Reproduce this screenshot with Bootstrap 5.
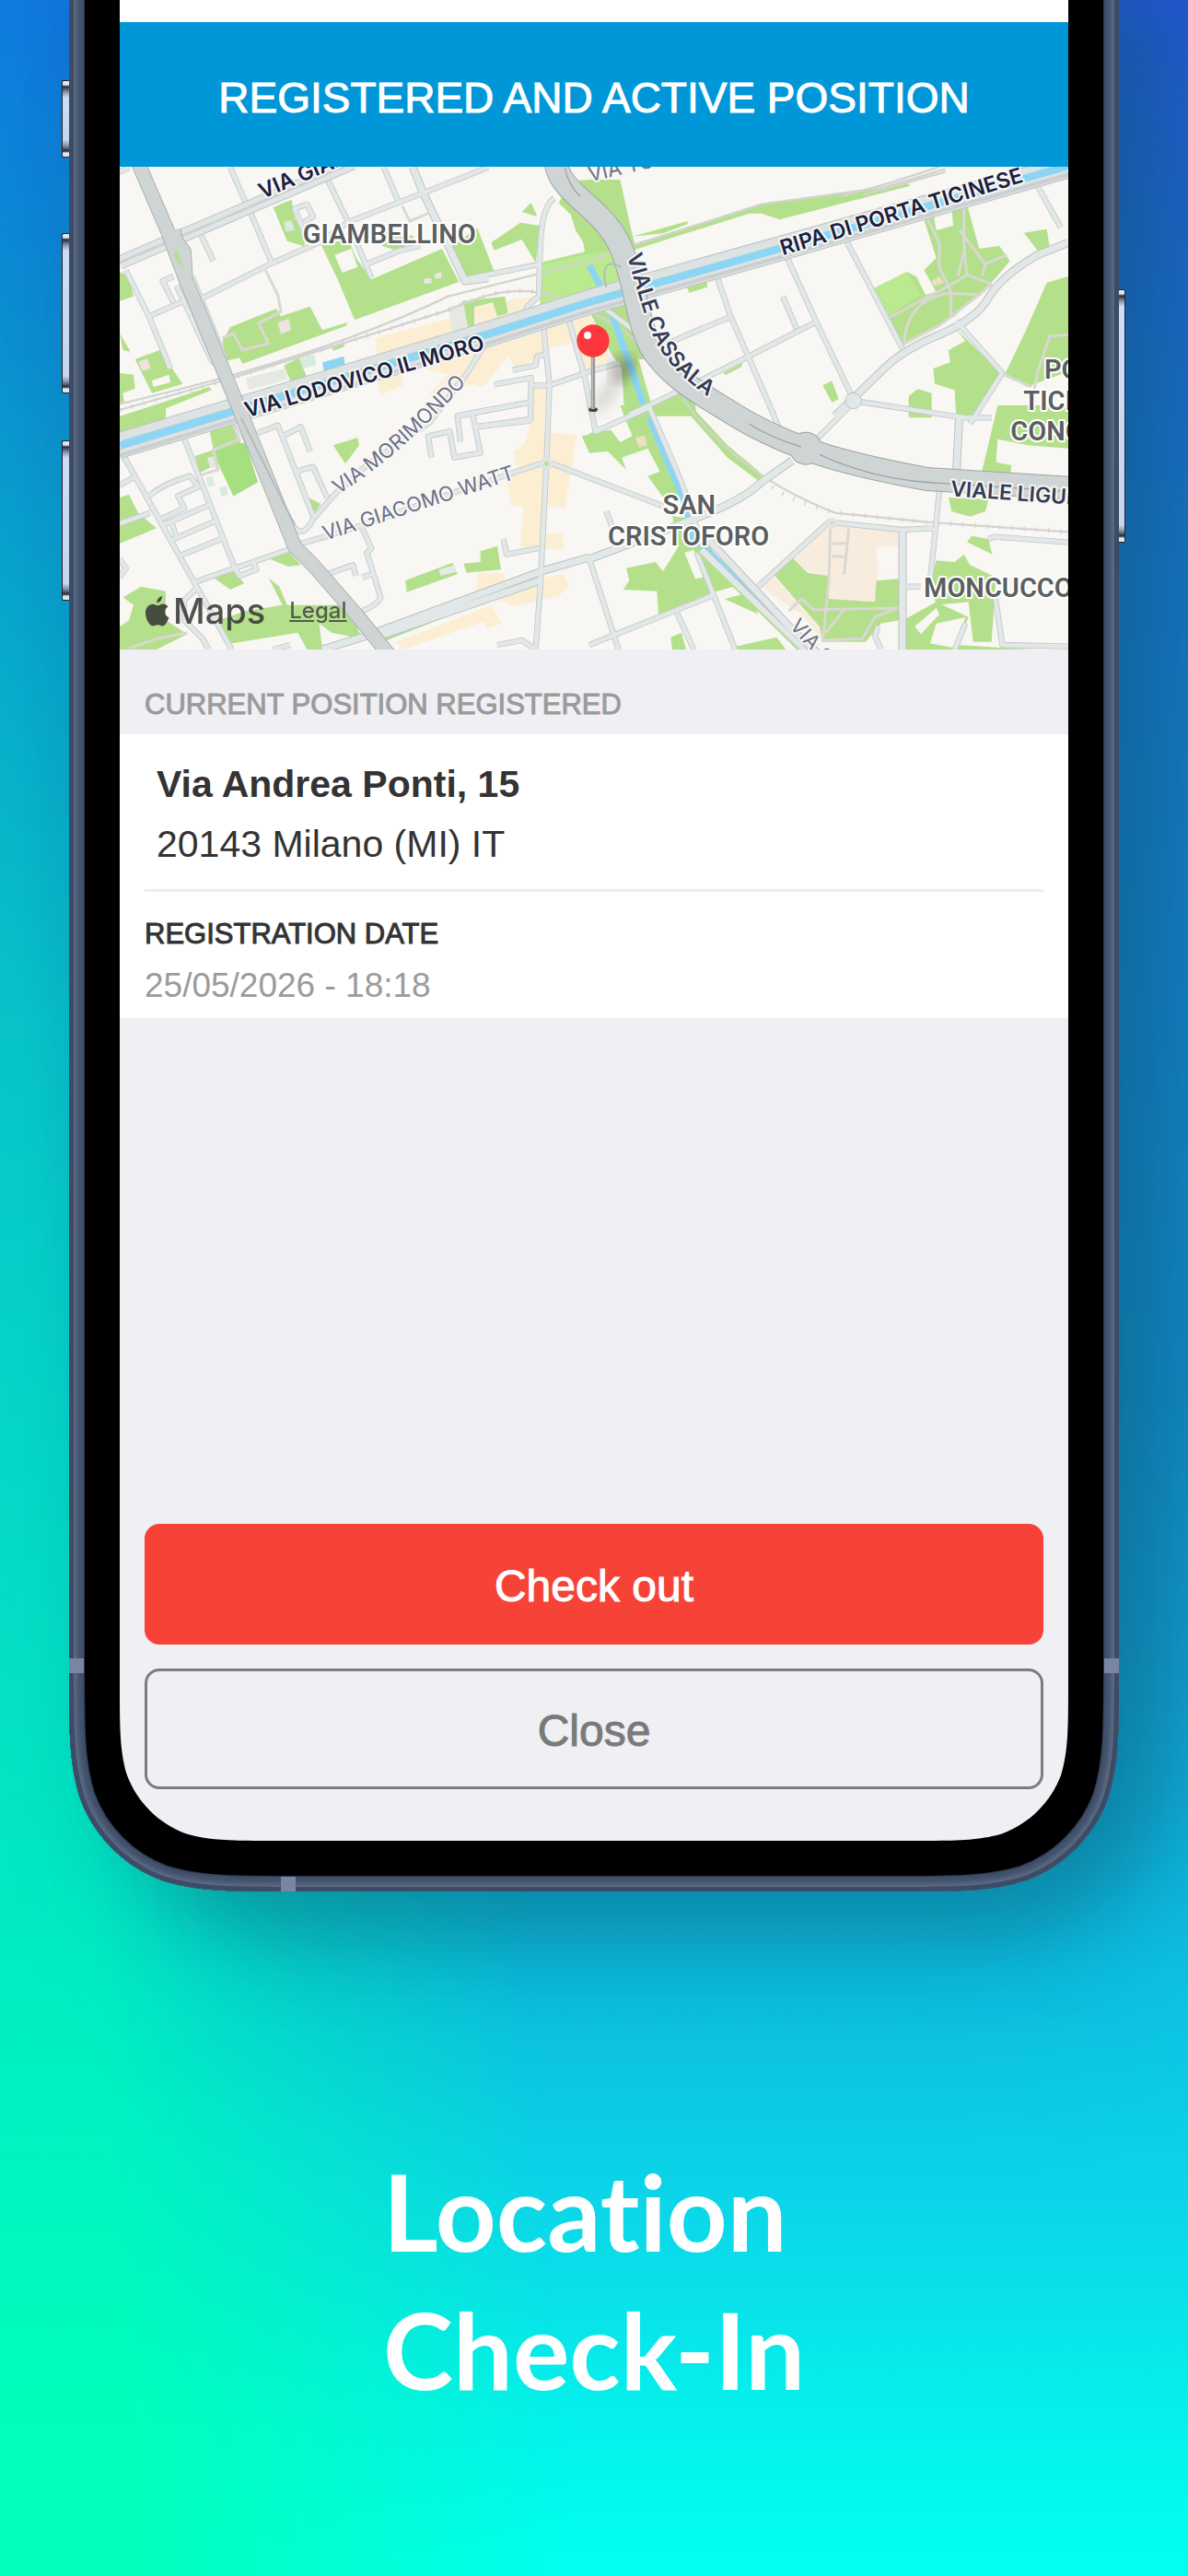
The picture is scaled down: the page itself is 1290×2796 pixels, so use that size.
<!DOCTYPE html>
<html lang="en">
<head>
<meta charset="utf-8">
<meta name="viewport" content="width=device-width, initial-scale=1">
<title>Location Check-In</title>
<link href="https://cdn.jsdelivr.net/npm/bootstrap@5.3.0/dist/css/bootstrap.min.css" rel="stylesheet">
<style>
body{font-family:"Liberation Sans",Arial,sans-serif;color:#333}
.stage{background:linear-gradient(#2358d2 0,#1a73c8 22%,#128bc8 54%,#149dd2 64%,#0ec2e4 76%,#0cd4e8 85%,#06eeec 93%,#00fff0 99%);padding:0 75px;isolation:isolate}
.stage::before{content:"";position:absolute;inset:0;z-index:-1;background:linear-gradient(#0c7fe0 0,#0a90d2 12%,#08aacb 25%,#08c4ca 40%,#06d5c8 54%,#04e2c6 66%,#00f0c2 80%,#00ffba 94%);-webkit-mask-image:linear-gradient(86deg,#000 10%,transparent 42%);mask-image:linear-gradient(86deg,#000 10%,transparent 42%)}
.shell{margin-top:-55px;padding:55px;border-radius:0 0 190px 190px;background:#000;
box-shadow:inset 0 0 0 5px #3d4c66,inset 0 0 0 7px #586880,inset 0 0 0 9px #52617a,inset 0 0 0 11px #4a5973,inset 0 0 0 14px #42516c,inset 0 0 0 16px #3e4c68,inset 0 0 0 17px #2f3a50,50px 50px 90px rgba(10,80,105,.4),90px 150px 180px rgba(10,110,140,.14)}
.display{background:#efeff4;border-radius:0 0 90px 90px;min-height:1998px;padding-top:24px;background-image:linear-gradient(#fff,#fff);background-size:100% 24px;background-repeat:no-repeat}
.titlebar{background:#0097d9;height:157px;padding-top:6px}
.titlebar h1{font-size:46px;line-height:56px}
.medium{-webkit-text-stroke:1px currentColor}
.corner{position:absolute;bottom:0;width:250px;height:250px;pointer-events:none}
.corner-l{left:0}.corner-r{right:0;transform:scaleX(-1)}
.band{position:absolute;width:16px;height:16px;background:#7b85a3}
.key{position:absolute;width:8px;border:1px solid #20242e;background:linear-gradient(#dfe4ee 0,#dfe4ee 4px,#222a38 6px,#8c96a8 12px,#cddcf7 18px,#c6d5f0 calc(100% - 18px),#8c96a8 calc(100% - 12px),#222a38 calc(100% - 6px),#dfe4ee calc(100% - 4px))}
.key-l{left:-8px;border-right:0;border-radius:2px 0 0 2px}.key-r{right:-7px;width:7px;border-left:0;border-radius:0 2px 2px 0}
.key-1{top:142px;height:84px}.key-2{top:308px;height:174px}.key-3{top:533px;height:174px}.key-4{top:369px;height:275px}
.band-l{left:0;bottom:237px}.band-r{right:0;bottom:237px}.band-b{left:230px;bottom:0}
.map-credit{left:28px;bottom:18px;gap:26px;color:#333;opacity:.85}
.map-brand{font:500 38px/48px Inter,sans-serif}
.map-legal{font:500 24px/32px Inter,sans-serif;color:#444}
.section-label{font-size:31px;line-height:36px;color:#9b9b9b;padding:42px 27px 14px}
.info{padding:22px 27px 14px}
.address{font-size:41px;line-height:65px;padding:0 13px 16px;border-bottom:3px solid #ededed}
.date-label{font-size:31px;line-height:36px;margin-top:28px}
.date-value{font-size:37px;line-height:42px;color:#9b9b9b;margin-top:17px}
.actions{padding:0 27px 56px;gap:26px}
.act{height:131px;padding-top:10px;font-size:48px;border-radius:16px;border-width:3px}
.act-out{--bs-btn-bg:#f64237;--bs-btn-border-color:#f64237;--bs-btn-color:#fff;--bs-btn-hover-bg:#e0382e;--bs-btn-hover-color:#fff}
.act-close{--bs-btn-color:#7a7a7a;--bs-btn-border-color:#7c7c7c;--bs-btn-hover-bg:#e2e1e8}
.caption-text{font:700 115px/150px Lato,sans-serif;font-variant-ligatures:none;margin:271px 0 60px}
.lbl{font-family:Inter,sans-serif;font-size:69px;font-weight:600;fill:#1a2040;stroke:#f8f7f3;stroke-width:12px;stroke-linejoin:round;paint-order:stroke}
.lbl-s{font-size:66px;font-weight:400;fill:#6b7088}
.lbl-v{fill:#343c58}
.lbl-d{font-family:Roboto,sans-serif;font-size:87px;font-weight:600;fill:#5b5f60;stroke:#fff}
</style>
</head>
<body>
<main class="stage position-relative overflow-hidden min-vh-100">
<div class="shell position-relative">
  <span class="key key-l key-1"></span>
  <span class="key key-l key-2"></span>
  <span class="key key-l key-3"></span>
  <span class="key key-r key-4"></span>

  <div class="display d-flex flex-column">
    <header class="titlebar d-flex align-items-center justify-content-center text-white text-center"><h1 class="m-0 fw-normal medium">REGISTERED AND ACTIVE POSITION</h1></header>

    <div class="position-relative">
    <svg class="d-block w-100 h-auto" viewBox="30 33 3090 1572" role="img" aria-label="Map of Milano around Via Andrea Ponti">
      <defs>
        <filter id="soft" x="-50%" y="-50%" width="200%" height="200%"><feGaussianBlur stdDeviation="22"/></filter>
        <path id="cassala" d="M1682 322C1715 430 1740 530 1775 600C1830 700 1900 760 2100 880"/>
        <path id="morimondo" d="M742 1100Q960 965 1200 690"/>
        <g id="streets">
          <path d="M30 50L60 35M390 35L440 150M455 180L525 345M300 460L530 345L690 275L770 215L1040 110L1230 35M700 60L775 215L850 395M890 35L940 150M835 350L945 305L1010 290M50 370L125 520L195 690M125 520L240 470M205 475L170 405L205 390M295 255L335 340M640 270L600 170L640 155L660 195L630 215M1150 400L1400 350M1445 135C1400 170 1400 250 1395 455L1355 490V515M1165 700L1215 620M1310 695L1385 680L1390 650L1415 645M1250 742L1370 720L1368 855L1190 880M1410 550L1430 740L1420 1000L1400 1400L1385 1605M1490 520L1545 720L1580 895L1760 815M1375 745L1430 745L1560 700L1660 672M1130 843L1370 800"/>
          <path d="M215 420L330 665Q355 690 370 650L265 390M405 855L600 1210Q630 1240 660 1180L730 1100L840 1000L1040 865L1165 700M480 900L545 875L660 1170M560 910L620 880L650 960M605 1025L660 1010L705 1110M40 970L275 1390L395 1605M235 905L405 1340M30 1070L75 1045M30 1195L130 1160M125 1105Q180 1060 260 1040L285 1075L220 1105L240 1145L165 1180M170 1200L320 1135M195 1250L345 1185M225 1300L360 1245M200 1195L215 1240M275 1385L580 1280M405 1340L420 1365L475 1345L465 1320M620 1260L690 1240L820 1200L1130 1090L1340 1020L1400 1000L1440 1000L1800 1138M705 1360L790 1330L800 1365M815 1200L850 1275L835 1290L880 1435Q870 1460 820 1480M820 1370L850 1360M1045 980L1035 910L1105 895L1120 980L1205 965L1180 840M1140 930L1130 845L1365 800M1190 880L1370 860M1280 1245L1290 1295L1395 1275M530 1605L585 1590M285 1400L240 1445V1510L300 1570L320 1605M1260 1590L1340 1575L1385 1605M30 1310L50 1340L30 1370"/>
          <path d="M1970 375L2020 520L2160 840L2175 880M2200 320L2300 540L2420 790M2190 455L2235 560M1790 620Q1900 570 2025 520M1690 840L1880 750L2080 650L2295 540M3000 60L3095 230M2755 535L2905 705L2800 870M1605 490L1730 585M2420 795L2780 850L2870 850M1755 815L1860 1060L1930 1270M1560 1310L1655 1605M1615 1155L1640 1220M1910 1290L2035 1605M1560 1590L1960 1430M1845 1485L1900 1605M2110 1400L2340 1190L2580 1215L2680 1210M2700 1090L2670 1380M2590 1400H2640M2860 1245L2880 1238L3120 1256M2880 1420L2905 1590L3120 1595M2785 1520L2750 1605M2500 1530L2490 1560L2510 1605M2300 920L2410 810M2390 260L2580 625"/>
        </g>
        <g id="avenues">
          <path d="M985 35L1015 110L1155 405L1230 395M2360 845L2520 690Q2580 630 2700 580T2860 460T3020 320L3120 280M1560 1310L1680 1265L1900 1180Q2060 1120 2120 1060L2220 990M2765 840L2755 1040M2580 1215V1605M690 1605L820 1565L1420 1345L1560 1305M880 1560L1400 1380M1925 1280L2270 1620M1950 1250L2220 1540L2330 1640"/>
        </g>
        <g id="bank"><path d="M30 912L405 800L1240 548L1560 447L2200 268L3120 10M30 968L405 855L1240 602L1560 500L2200 320L3120 55"/></g>
        <path id="viale" d="M1450 15C1460 120 1600 160 1660 290C1710 400 1710 520 1760 620C1820 720 1920 770 2040 845Q2130 900 2260 950T2660 1050L3130 1080"/>
        <path id="west" d="M90 20L185 240L245 400L425 835L600 1270L660 1330L800 1490L910 1625M205 240L245 400M195 250L240 310L245 400"/>
      </defs>
      <rect x="30" y="33" width="3090" height="1572" fill="#f8f7f3"/>
      <g fill="#fbeed3">
        <path d="M865 590L1110 525L1125 575L865 650ZM870 735L945 700L955 745L880 775ZM1020 690L1400 570L1415 650L1320 690L1295 650L1215 750L1180 740L1060 790L1040 770L1100 710ZM1415 545L1500 525L1530 600L1430 625ZM1180 490L1400 450L1350 500L1190 550ZM1380 750H1420L1410 900L1520 905L1510 960L1480 1145L1420 1140L1410 1225L1475 1230V1280L1335 1270L1345 1140L1305 1135L1290 1050L1330 1030L1310 960L1350 935L1370 850ZM1200 1355H1280L1290 1390L1475 1360L1495 1400L1460 1430L1320 1465L1190 1415ZM930 1580L1240 1460L1275 1520L1230 1535L1215 1515L950 1605ZM1495 525L1560 510L1620 640L1615 675L1545 700Z"/>
        <path fill="#f8ecde" d="M2340 1205L2410 1200L2570 1220V1360H2500L2490 1450L2340 1440V1365L2260 1350L2220 1305ZM2120 1400L2155 1365L2320 1530L2315 1570L2250 1490L2160 1430Z"/>
      </g>
      <path fill="#f8f7f3" d="M2495 1270H2570V1360H2500Z"/>
      <g fill="#b4e08c">
        <path d="M530 165L590 140L600 200L640 260L630 292L575 275ZM685 285L775 270L800 330L850 400L1080 300L1135 408L795 532L740 400ZM885 290L900 235L990 260L940 310ZM1115 290L1195 232L1250 375L1150 400ZM1240 280L1335 215L1400 225L1385 345L1340 270L1250 305ZM1340 180L1370 150L1390 195ZM1400 345L1545 310L1540 280L1515 240L1500 190L1460 150L1500 80L1560 75H1660L1700 255L1710 290L1670 420L1560 460L1400 495ZM1560 505L1690 480L1770 640L1900 770L1910 845H1675L1665 690L1630 640Z"/>
        <path d="M30 375L60 390L75 455L30 470ZM390 555L540 495L555 520L650 488L690 565L770 540V550L430 675L420 655L375 665L365 600ZM80 660L160 630L235 740L135 770ZM30 575L65 635L40 630ZM30 705L75 710L80 755L40 770L45 800L30 810ZM30 845L170 800L320 750L330 760L180 820V860L30 905ZM195 300L215 290L230 365ZM565 680L615 655L640 720L590 740ZM725 620L760 605V620L725 632ZM1145 470L1285 455L1295 510L1260 520L1245 475L1185 490V560H1165Z"/>
        <path d="M320 880L395 860L420 920L480 1060L400 1105L350 1000L290 1030L275 975L335 955ZM30 1110L60 1100L90 1160L150 1210L30 1260ZM725 940L805 915L810 940L765 1000ZM645 1110L685 1130L660 1170ZM505 1305L580 1285L620 1330L580 1335ZM335 1370L405 1350L435 1390L390 1410ZM960 1380L1115 1322L1130 1360L965 1418ZM1150 1325L1205 1320V1285L1260 1268L1272 1345L1160 1355ZM40 1435L100 1400L180 1415V1510L250 1555L150 1605H30V1530L60 1510L75 1460ZM515 1372L550 1400L575 1460L770 1460L820 1570L720 1550L680 1520L690 1605H640L610 1550L395 1585L370 1550L350 1510L440 1480L560 1460ZM1535 910L1560 905V965ZM880 1565L1400 1365L1395 1380L900 1575Z"/>
        <path d="M1700 285L2120 155L2600 88L2605 95L2180 205L2120 185L2080 185L1700 305ZM1700 260L1880 210V220L1800 250ZM1870 405L1940 390L1945 425L1885 443ZM2485 430L2595 375L2625 390L2655 450L2690 440L2650 370L2690 330L2645 190L2680 180L2690 240L2745 225L2740 165L2790 155L2830 300L2895 290L2930 340L2870 410L2750 520L2580 615ZM2975 248L3050 236L3060 300L3020 305ZM3120 390L3050 410L2980 570L2915 705L2985 750L3120 700ZM2750 555L2785 600L2730 630L2735 670L2680 690L2685 740L2750 760L2755 850H2820L2905 710ZM2600 780L2630 757L2675 770V850H2600ZM2320 745L2350 730L2372 790L2350 800ZM1995 705L2060 670L2055 685L2005 710ZM2730 150L2880 105L2810 150Z"/>
        <path d="M1660 810H1760L1865 1110L1800 1110L1750 1040L1790 1025L1750 950L1665 980L1680 1020L1620 960L1560 965V900L1630 890L1660 930L1700 910L1675 850ZM2890 810H3120V950L2990 940L2890 920L2885 995L2935 1005L2930 1045L2835 1040ZM2730 1110L2860 1115L2850 1155L2800 1172L2740 1155ZM2790 1255L2805 1235L2860 1245L2872 1295ZM2690 1315L2750 1320L2780 1295L2800 1330L2885 1370L2870 1580H2810L2795 1450L2690 1460L2670 1390ZM2590 1505L2690 1450L2795 1500L2760 1590L3000 1605H2590ZM1830 1170L1900 1180L2030 1400L1960 1420L1785 1490L1780 1415L1670 1410L1690 1380L1680 1340L1775 1320L1800 1350L1850 1270ZM1860 810H1890L2010 940L2130 1040L2110 1055L2010 980ZM2000 1440L2080 1420L2110 1490ZM2035 1595L2170 1565L2200 1605H2040ZM1825 1565L1860 1550L1875 1605H1830ZM2155 1355L2220 1305L2270 1355L2340 1365V1440L2490 1450L2495 1380L2570 1375V1510L2510 1520L2460 1580H2320L2310 1530Z"/>
      </g>
      <g fill="#f8f7f3"><path d="M730 320L785 300L805 360L755 378ZM1720 660H1750L1850 755L1760 800ZM2620 1530L2690 1470L2700 1490L2640 1555ZM2690 1520L2785 1500L2750 1600L2670 1585ZM135 730L190 710L195 735L140 750ZM1870 1290L1900 1280L1930 1370L1905 1375Z"/></g>
      <path fill="#a5df80" d="M340 960L440 930L480 1060L400 1105Z"/>
      <path fill="#bae98f" d="M1405 350L1560 315L1680 300L1670 415L1405 490ZM2485 430L2595 375L2640 450L2535 520Z"/>
      <path fill="#f0e2e1" d="M545 540L580 528L588 565L555 578ZM90 668L120 658L130 690L105 698Z"/>
      <path fill="#e6e9e2" d="M440 720L570 690L575 725L450 760ZM1100 490L1150 480L1165 560L1115 570ZM1020 398L1045 395V412L1022 415ZM1055 382L1078 376V396L1058 398ZM1070 1345L1120 1330L1125 1352L1075 1365ZM315 980L340 975L350 1010L325 1015Z"/>
      <path fill="#d9ebdf" d="M565 212L590 208L600 240L570 244ZM618 655L665 645L670 680L625 690ZM310 1045L330 1040L340 1070L318 1075ZM355 1078L378 1072L384 1100L362 1108Z"/>
      <path fill="#8cd6f5" d="M690 670L760 650L765 685L695 700Z"/>
      <path fill="#eddfc4" d="M2675 405L2700 390L2715 410L2685 422ZM1710 915L1740 908L1748 940L1722 948Z"/>
      <g fill="none" stroke="#d9d8d4" stroke-width="9"><path d="M365 590L400 575L430 630L515 608L482 543L555 505L545 450L505 370M950 160L975 210L1035 185M2535 525L2750 410L2790 385L2870 415M2585 610C2590 500 2660 450 2740 445L2830 450L2870 415M2585 610L2700 550L2830 450M2655 190L2700 280L2700 360L2738 440V520M2780 155V290L2790 385M2765 240L2850 350L2840 390M2850 350L2920 320M2760 390L2785 290M285 1040L350 1020L335 955L420 920L390 850M60 1600L150 1570L250 1550M2210 1480L2250 1440L2290 1475L2570 1470M2320 1575L2450 1570L2490 1500L2560 1470M2330 1550L2390 1475M3120 580L3060 585L3020 700L3000 810M2910 710L3000 750M2345 1210L2340 1380L2320 1580M2405 1210L2390 1360M2350 1260H2400M2350 1302H2390"/></g>
      <g fill="none" stroke="#d2d3d0" stroke-width="7"><path d="M30 805Q700 650 1100 455L1560 340L1700 290L2120 155L2520 100L2720 40M30 825L400 720L1100 500C1250 430 1350 425 1450 455C1620 520 1760 600 1880 810C2010 980 2160 1080 2360 1160L2660 1190L3120 1222"/><path d="M2380 130L2540 85L2700 33M2450 125L2720 50"/></g>
      <path d="M30 825L400 720L1100 500C1250 430 1350 425 1450 455M2120 1055C2200 1110 2260 1130 2360 1160L2660 1190L3120 1222" fill="none" stroke="#d2d3d0" stroke-width="16" stroke-dasharray="4 36"/>
      <g fill="none" stroke="#8cd6f5" stroke-width="22"><path d="M1560 355L1600 430M1628 500Q1680 640 1735 805M1755 850L1865 1110L1900 1240L2280 1620"/></g>
      <g fill="none" stroke-linejoin="round">
        <use href="#streets" stroke="#c2c8c9" stroke-width="19"/><use href="#avenues" stroke="#bcc3c4" stroke-width="27"/>
        <use href="#streets" stroke="#e2e7e8" stroke-width="14"/><use href="#avenues" stroke="#e2e7e8" stroke-width="21"/>
        <path d="M30 345L790 20" stroke="#bcc3c4" stroke-width="46"/><path d="M30 345L790 20" stroke="#e0e5e6" stroke-width="40"/><path d="M30 345L790 20" stroke="#cfcfcf" stroke-width="8"/>
        <path d="M1910 1285L2270 1630" stroke="#b4e08c" stroke-width="5"/>
        <use href="#bank" stroke="#bcc3c4" stroke-width="32"/><use href="#bank" stroke="#dde2e3" stroke-width="26"/>
        <path d="M30 972L405 858L1240 605L1560 503L2200 322L3120 58" stroke="#cbcfd0" stroke-width="12"/>
        <path d="M30 940L405 828L1240 575L1560 474L2200 294L3120 30" stroke="#8cd6f5" stroke-width="24"/>
        <use href="#viale" stroke="#9da4a5" stroke-width="78"/><circle cx="2265" cy="950" r="54" fill="#9da4a5"/>
        <use href="#west" stroke="#a3aaab" stroke-width="48"/>
        <use href="#viale" stroke="#cfd5d5" stroke-width="72"/><circle cx="2265" cy="950" r="51" fill="#cfd5d5"/>
        <use href="#west" stroke="#cfd5d5" stroke-width="43"/>
        <path d="M1480 35Q1490 90 1530 130M2080 870Q2150 915 2250 945M2310 970Q2480 1050 2680 1062L3120 1090" stroke="#9da4a5" stroke-width="4"/>
        <path d="M425 850L600 1200M1665 360C1610 330 1600 370 1615 425" stroke="#b4bbbc" stroke-width="6"/>
        <g fill="#b4e08c" stroke="#dfe4e5" stroke-width="14"><circle cx="1420" cy="1000" r="14"/><circle cx="2350" cy="1193" r="11"/></g><circle cx="2420" cy="795" r="26" fill="#e2e7e8" stroke="#bcc3c4" stroke-width="3"/>
      </g>
      <path d="M215 300L240 370L205 320Z" fill="#b4e08c"/>
      <g class="lbl">
        <text transform="translate(495 138) rotate(-23)">VIA GIAMBELLINO</text>
        <text transform="translate(445 850) rotate(-16)">VIA LODOVICO IL MORO</text>
        <text transform="translate(2190 322) rotate(-17)">RIPA DI PORTA TICINESE</text>
        <text class="lbl-v"><textPath href="#cassala">VIALE CASSALA</textPath></text>
        <text class="lbl-v" transform="translate(2735 1105) rotate(4)">VIALE LIGURIA</text>
        <text class="lbl-s" transform="translate(1562 82) rotate(-13)">VIA TOLSTOI</text>
        <text class="lbl-s"><textPath href="#morimondo">VIA MORIMONDO</textPath></text>
        <text class="lbl-s" transform="translate(700 1250) rotate(-18)">VIA GIACOMO WATT</text>
        <text class="lbl-s" transform="translate(2210 1530) rotate(48)">VIA SAN</text>
      </g>
      <g class="lbl lbl-d">
        <text x="908" y="283" text-anchor="middle">GIAMBELLINO</text>
        <text x="1885" y="1165" text-anchor="middle">SAN</text>
        <text x="1883" y="1267" text-anchor="middle">CRISTOFORO</text>
        <text x="2649" y="1434">MONCUCCO</text>
        <text x="3042" y="722">PORTA</text><text x="2974" y="824">TICINESE</text><text x="2932" y="925">CONCHETTA</text>
      </g>
      <path d="M1580 825L1700 660" stroke="#000" stroke-opacity=".18" stroke-width="34" filter="url(#soft)"/>
      <path d="M1690 660L1640 720" stroke="#000" stroke-opacity=".24" stroke-width="60" filter="url(#soft)"/>
      <ellipse cx="1572" cy="824" rx="15" ry="7" fill="#444"/>
      <path d="M1572 640V822" stroke="#999" stroke-width="13"/><path d="M1570 640V822" stroke="#bbb" stroke-width="4"/>
      <circle cx="1572" cy="600" r="53" fill="#fd383d"/><circle cx="1554" cy="582" r="12" fill="#fff"/>
    </svg>
    <div class="map-credit position-absolute d-flex align-items-center">
      <span class="map-brand d-flex align-items-center"><svg width="26" height="33" viewBox="0 0 26 33" aria-hidden="true" fill="currentColor"><path d="M18 0C18.400 3.500 15.500 7.200 12.300 7.400C11.900 4 14.900 .800 18 0ZM24.500 11.500C19.500 14.600 20.300 21 25.500 23.200C24 27.400 21.300 32.500 18.300 32.500C16.500 32.500 15.600 31.300 13.300 31.300C11 31.300 9.800 32.500 8.200 32.500C4.600 32.500 0 25 0 18.500C0 12.200 3.900 8.700 7.800 8.700C10.200 8.700 11.700 10.200 13.300 10.200C14.800 10.200 16.600 8.500 19.300 8.500C21.300 8.500 23.300 9.500 24.500 11.500Z"/></svg><span class="ms-1">Maps</span></span>
      <a class="map-legal" href="#legal">Legal</a>
    </div>
    </div>

    <h2 class="section-label medium fw-normal m-0">CURRENT POSITION REGISTERED</h2>
    <section class="info bg-white">
      <div class="address"><div class="fw-bold">Via Andrea Ponti, 15</div><div>20143 Milano (MI) IT</div></div>
      <div class="date-label medium">REGISTRATION DATE</div>
      <div class="date-value">25/05/2026 - 18:18</div>
    </section>

    <div class="actions d-grid mt-auto">
      <button type="button" class="btn act act-out medium">Check out</button>
      <button type="button" class="btn act act-close medium">Close</button>
    </div>
  </div>

  <svg class="corner corner-l" viewBox="0 0 250 250" aria-hidden="true">
    <defs>
      <path id="rim" d="M0 -40V5C0 76 0 111 12 149C27 190 60 223 101 238C139 250 174 250 245 250H290"/>
      <clipPath id="inside"><path d="M0 0V5C0 76 0 111 12 149C27 190 60 223 101 238C139 250 174 250 245 250H250V0Z"/></clipPath>
      <g id="bezel">
        <path fill-rule="evenodd" d="M0 0V5C0 76 0 111 12 149C27 190 60 223 101 238C139 250 174 250 245 250H250V195H226C177 195 152 195 126 187C97 176 74 153 63 124C55 98 55 73 55 24V0Z"/>
        <g clip-path="url(#inside)" fill="none">
          <use href="#rim" stroke="#2f3a50" stroke-width="34"/><use href="#rim" stroke="#3e4c68" stroke-width="32"/><use href="#rim" stroke="#42516c" stroke-width="28"/><use href="#rim" stroke="#4a5973" stroke-width="22"/><use href="#rim" stroke="#52617a" stroke-width="18"/><use href="#rim" stroke="#586880" stroke-width="14"/><use href="#rim" stroke="#3d4c66" stroke-width="10"/>
        </g>
      </g>
    </defs>
    <use href="#bezel"/>
  </svg>
  <svg class="corner corner-r" viewBox="0 0 250 250" aria-hidden="true"><use href="#bezel"/></svg>
  <span class="band band-l"></span>
  <span class="band band-r"></span>
  <span class="band band-b"></span>
</div>

<div class="text-center"><p class="caption-text text-white text-start d-inline-block">Location<br>Check-In</p></div>
</main>
<script src="https://cdn.jsdelivr.net/npm/bootstrap@5.3.0/dist/js/bootstrap.bundle.min.js"></script>
</body>
</html>
